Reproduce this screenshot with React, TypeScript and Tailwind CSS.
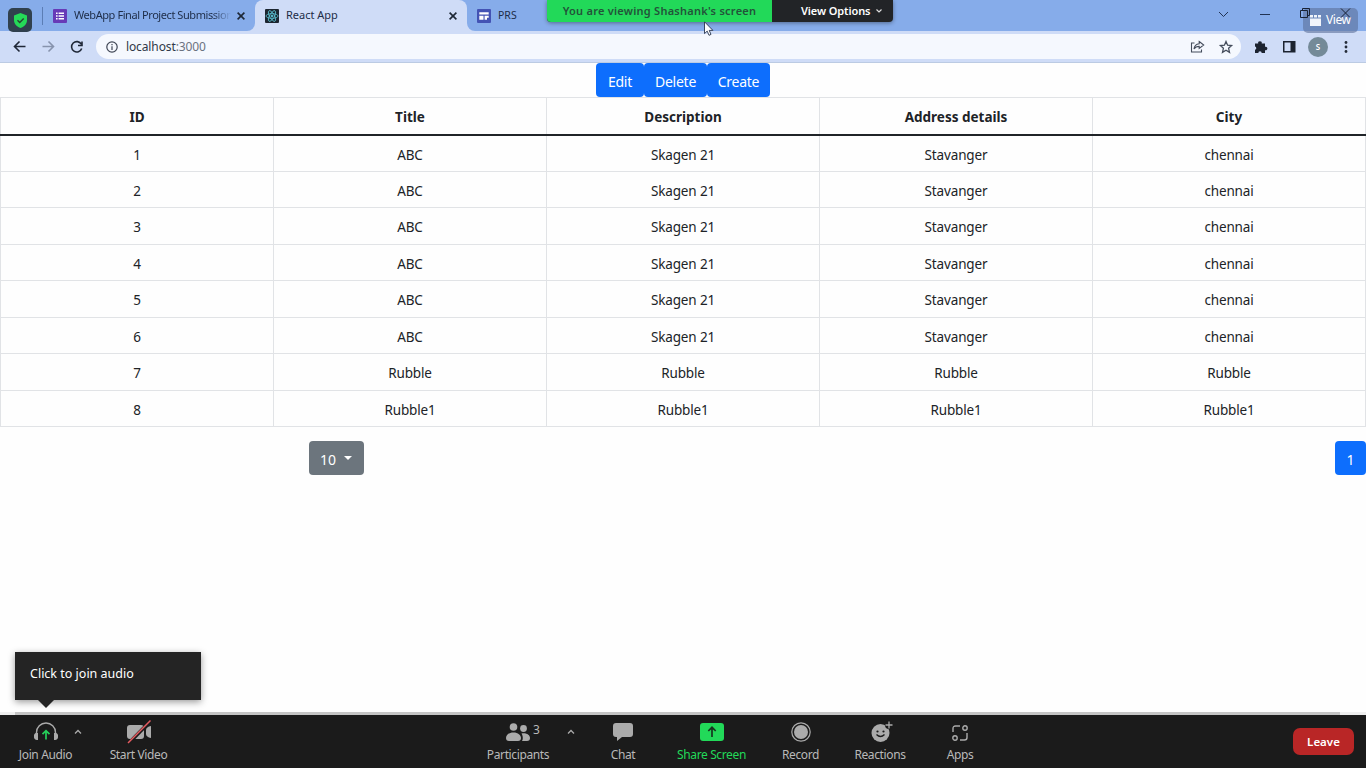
import React from "react";

const columns = ["ID", "Title", "Description", "Address details", "City"];
const rows: string[][] = [
  ...[1, 2, 3, 4, 5, 6].map((n) => [String(n), "ABC", "Skagen 21", "Stavanger", "chennai"]),
  ["7", "Rubble", "Rubble", "Rubble", "Rubble"],
  ["8", "Rubble1", "Rubble1", "Rubble1", "Rubble1"],
];

function Close() {
  return (
    <svg className="h-2 w-2 shrink-0" viewBox="0 0 8 8" stroke="#1d2736" strokeWidth="1.6">
      <path d="M.6.6 7.4 7.4M7.4.6.6 7.4" />
    </svg>
  );
}

function ReactLogo() {
  return (
    <svg className="h-3.5 w-3.5 shrink-0" viewBox="0 0 14 14" fill="none" stroke="#5cc3d3" strokeWidth=".8">
      <rect width="14" height="14" rx="1" fill="#1c2630" stroke="none" />
      <ellipse cx="7" cy="7" rx="6" ry="2.4" />
      <ellipse cx="7" cy="7" rx="6" ry="2.4" transform="rotate(60 7 7)" />
      <ellipse cx="7" cy="7" rx="6" ry="2.4" transform="rotate(120 7 7)" />
      <circle cx="7" cy="7" r="1" fill="#5cc3d3" />
    </svg>
  );
}

function TabStrip() {
  return (
    <div className="flex bg-[#cfdcf7] text-[11px] text-[#1d2c47]">
      <div className="flex h-[31px] w-[255px] shrink-0 items-center rounded-br-lg bg-[#86acea] pl-[42px]">
        <div className="h-[18px] w-px bg-[#5b7db5]" />
        <svg className="ml-2.5 h-3.5 w-3.5 shrink-0" viewBox="0 0 14 14">
          <rect width="14" height="14" rx="1" fill="#673ab7" />
          <path d="M3 3.5h1.6v1.6H3zM5.6 3.5H11v1.6H5.6zM3 6.2h1.6v1.6H3zM5.6 6.2H11v1.6H5.6zM3 8.9h1.6v1.6H3zM5.6 8.9H11v1.6H5.6z" fill="#fff" />
        </svg>
        <div className="ml-[7px] w-[157px] whitespace-nowrap bg-gradient-to-r from-[#1d2c47] from-88% to-[#86acea] bg-clip-text tracking-[-0.43px] text-transparent">
          WebApp Final Project Submission
        </div>
        <div className="ml-1.5"><Close /></div>
      </div>
      <div className="flex w-[212px] shrink-0 bg-[#86acea]">
        <div className="flex w-full items-center rounded-t-lg bg-[#cfdcf7] px-2.5">
          <ReactLogo />
          <span className="ml-[7px]">React App</span>
          <div className="ml-auto"><Close /></div>
        </div>
      </div>
      <div className="flex grow items-center rounded-bl-lg bg-[#86acea] pl-2.5">
        <svg className="h-3.5 w-3.5" viewBox="0 0 14 14">
          <rect width="14" height="14" rx="1" fill="#4353b4" />
          <path d="M2.3 3.2h9.4v2.3H2.3zM2.3 6.8h4.2v4H2.3zM7.6 6.8h4.1v2H10v2H7.6z" fill="#fff" />
        </svg>
        <span className="ml-[7px] text-[10.5px]">PRS</span>
        <svg className="mb-1 ml-auto mr-[68px] h-3 w-[82px]" viewBox="0 0 82 12" fill="none" stroke="#213353">
          <path d="m11 4 4.500 4.500L20 4M52 6.500h10" transform="translate(-8 0)" />
        </svg>
      </div>
    </div>
  );
}

function Toolbar() {
  return (
    <div className="flex h-8 items-center border-b border-[#bccbe3] bg-[#cfdcf7]">
      <svg className="ml-3 h-4 w-[74px] shrink-0" viewBox="0 0 74 16" fill="none" strokeWidth="1.6">
        <path d="M13.500 7.500H2.500M7.500 2.500l-5 5 5 5" stroke="#1f2737" />
        <path d="M30.500 7.500h11M36.500 2.500l5 5-5 5" stroke="#8793ad" />
        <path d="M69.300 5.200A5.200 5.200 0 1 0 69.700 9.500M70 2.500v4h-4" stroke="#1f2737" />
      </svg>
      <div className="ml-[10px] flex h-[25px] w-[1145px] shrink-0 items-center rounded-full bg-[#f5f8fe] pl-[10px] pr-[7px]">
        <svg className="h-3 w-3" viewBox="0 0 12 12" fill="none" stroke="#3e4554" strokeWidth="1.200">
          <circle cx="6" cy="6" r="5.200" />
          <path d="M6 5.300V9M6 3v1.300" />
        </svg>
        <span className="ml-2 text-[12px] tracking-[-0.12px] text-[#303848]">
          localhost<span className="text-[#6b7280]">:3000</span>
        </span>
        <svg className="ml-auto h-3.5 w-11" viewBox="0 0 44 14" fill="none" stroke="#454d5c" strokeWidth="1.100">
          <path d="M4.500 3H1.500v9h10V9.500" />
          <path d="M9.200 1.500 13.700 5 9.200 8.500V6.400C7 6.400 5.300 7 4 9c.3-3 2-5 5.200-5.300z" />
          <path d="m36 1.500 1.600 3.700 4 .4-3 2.700.9 4-3.500-2.100-3.500 2.100.9-4-3-2.700 4-.4z" strokeWidth="1.300" />
        </svg>
      </div>
      <svg className="ml-3 h-4 w-[44px] shrink-0" viewBox="0 0 44 16" fill="#1c2330">
        <path d="M2 4.500h3.200a1.800 1.800 0 1 1 3.500 0H12v3.300a1.800 1.800 0 1 1 0 3.400V14H8.700a1.700 1.700 0 0 0-3.400 0H2v-3.200a1.700 1.700 0 0 0 0-3.300z" />
        <path d="M30 2h12.500v11.500H30zM31.500 3.500V12h6V3.500z" fillRule="evenodd" />
      </svg>
      <div className="ml-[11px] flex h-5 w-5 shrink-0 items-center justify-center rounded-full bg-[#748a98] text-[8px] font-semibold text-white">S</div>
      <svg className="ml-4 h-3.5 w-1 shrink-0" viewBox="0 0 4 14" fill="#252c39">
        <circle cx="2" cy="2.500" r="1.400" /><circle cx="2" cy="7" r="1.400" /><circle cx="2" cy="11.500" r="1.400" />
      </svg>
    </div>
  );
}

function ShareOverlay() {
  return (
    <>
      <div className="absolute left-2 top-2 flex h-6 w-6 items-center justify-center rounded-[5px] bg-[#30404e]">
        <svg className="h-[15px] w-[13px]" viewBox="0 0 13 15">
          <path d="M6.500 0 13 2.600V7c0 4-2.800 6.700-6.500 8C2.800 13.700 0 11 0 7V2.600z" fill="#25d958" />
          <path d="m3.500 7.300 2.200 2.200L9.700 5.500" stroke="#284532" strokeWidth="1.400" fill="none" />
        </svg>
      </div>
      <div className="absolute left-[547px] top-0 flex h-[22px] w-[346px] overflow-hidden rounded-b bg-[#222427] text-[11px] font-semibold shadow-[0_1px_4px_#0006]">
        <div className="flex w-[225px] items-center justify-center whitespace-nowrap bg-[#22d959] text-[#23533a]">
          <span className="tracking-[0.25px]">You are viewing Shashank's screen</span>
        </div>
        <div className="flex grow items-center whitespace-nowrap pl-[29px] text-white">
          <span className="tracking-[-0.1px]">View Options</span>
          <svg className="ml-1.5 h-1.5 w-1.5" viewBox="0 0 6 6" fill="none" stroke="#ddd" strokeWidth="1.200"><path d="m.5 1.500 2.500 2.500 2.500-2.500" /></svg>
        </div>
      </div>
      <svg className="absolute left-[704px] top-[21px] h-[15px] w-2.5" viewBox="0 0 10 15">
        <path d="M.5.8v11.800l2.700-2.500 1.800 4.200 2-.9-1.800-4h3.700z" fill="#fff" stroke="#29364d" strokeWidth=".9" />
      </svg>
      <div className="absolute left-[1303px] top-2 flex h-[25px] w-[55px] items-center rounded-[5px] bg-[#5b7099]/60 pl-[7px] text-[12px] text-white">
        <svg className="h-[11px] w-[11px]" viewBox="0 0 11 11" fill="#f1f4fa"><path d="M0 0h3v2.500H0zM4 0h3v2.500H4zM8 0h3v2.500H8zM0 3.500h11V11H0z" /></svg>
        <span className="mb-0.5 ml-[5px] tracking-[-0.45px]">View</span>
      </div>
      <svg className="absolute left-[1298px] top-[7px] h-3 w-[54px]" viewBox="0 0 54 12" fill="none" stroke="#182235">
        <path d="M2.500 3.500h7v7h-7zM4.500 3.500v-2h7v7h-2M43 1.500l9 9m0-9-9 9" />
      </svg>
    </>
  );
}

function DataTable() {
  return (
    <table className="w-full table-fixed border-collapse text-center text-[13.5px] leading-5 text-[#202327]">
      <thead>
        <tr className="h-[37px]">
          {columns.map((c) => (
            <th key={c} className="border-x border-b-2 border-t border-b-[#202428] border-l-[#e1e3e6] border-r-[#e1e3e6] border-t-[#e1e3e6] p-0 pt-[3px] font-bold">{c}</th>
          ))}
        </tr>
      </thead>
      <tbody>
        {rows.map((r) => (
          <tr key={r[0]} className="h-[36.5px]">
            {r.map((v, i) => (
              <td key={i} className="border border-[#e1e3e6] p-0 pt-[3px] tracking-[-0.15px]">{v}</td>
            ))}
          </tr>
        ))}
      </tbody>
    </table>
  );
}

function Page() {
  return (
    <main className="flex h-[652px] flex-col bg-[#fefefe]">
      <div className="flex h-[34px] shrink-0 justify-center text-[14px] text-white">
        {[["Edit", "w-12"], ["Delete", "w-[63px]"], ["Create", "w-[63px]"]].map(([t, w]) => (
          <button key={t} className={w + " rounded bg-[#0d6efd] pt-0.5 tracking-[-0.25px]"}>{t}</button>
        ))}
      </div>
      <DataTable />
      <div className="mt-3.5 flex justify-between pl-[309px] text-[14px] text-white">
        <button className="flex h-[34px] w-[55px] items-center rounded bg-[#6c757d] pl-[11px] pt-0.5">
          10
          <svg className="mb-0.5 ml-2 h-1 w-2" viewBox="0 0 8 4" fill="#fff"><path d="M0 0h8L4 4z" /></svg>
        </button>
        <button className="h-[34px] w-[31px] rounded bg-[#0d6efd] pt-0.5">1</button>
      </div>
      <div className="mt-auto h-[3px] bg-[#eeeeee] pl-[15px] pr-[26px]"><div className="h-full bg-[#c4c4c4]" /></div>
    </main>
  );
}

function Item({ label, width, children, green }: { label: string; width: string; children: React.ReactNode; green?: boolean }) {
  return (
    <div className={width + " flex shrink-0 flex-col items-center pt-[5px] " + (green ? "text-[#22d959]" : "text-[#b9b9b9]")}>
      <div className="flex h-6 items-center justify-center">{children}</div>
      <span className="mt-[3px] whitespace-nowrap text-[12px] leading-4 tracking-[-0.37px]">{label}</span>
    </div>
  );
}

function Caret({ margin }: { margin: string }) {
  return (
    <svg className={margin + " h-1.5 w-2 shrink-0"} viewBox="0 0 8 6" fill="none" stroke="#aaa" strokeWidth="1.300"><path d="m1 4.500 3-3 3 3" /></svg>
  );
}

function MeetingBar() {
  return (
    <footer className="relative flex h-[53px] bg-[#1b1b1b]">
      <Item label="Join Audio" width="w-[91px]">
        <svg className="h-5 w-6" viewBox="0 0 24 20" fill="none">
          <path d="M2.500 12.500v-2a9.500 9.500 0 0 1 19 0v2" stroke="#ababab" strokeWidth="1.400" />
          <path d="M4 11v7H3a3 3 0 0 1-3-3.500A3 3 0 0 1 4 11M20 11v7h1a3 3 0 0 0 3-3.500 3 3 0 0 0-4-3.500" fill="#ababab" />
          <path d="M12 17.500V9M8.500 12.200 12 8.700l3.500 3.500" stroke="#25d15a" strokeWidth="1.700" />
        </svg>
      </Item>
      <div className="-ml-[17px] w-[17px]"><Caret margin="mt-[14px]" /></div>
      <Item label="Start Video" width="w-[95px]">
        <svg className="h-6 w-6" viewBox="0 0 24 24">
          <rect y="5" width="17" height="14" rx="3" fill="#ababab" />
          <path d="M24 6v12c-3-.5-5-2-5-4v-4c0-2 2-3.500 5-4" fill="#ababab" />
          <path d="M1.500 23.500 23.500 1" stroke="#1b1b1b" strokeWidth="3.500" /><path d="M1 23 23.500.500" stroke="#e65b60" strokeWidth="1.500" />
        </svg>
      </Item>
      <div className="ml-[282px] flex">
        <Item label="Participants" width="w-[100px]">
          <svg className="ml-[10px] h-[18px] w-6" viewBox="0 0 24 18" fill="#ababab">
            <circle cx="7.500" cy="4" r="3.800" /><circle cx="17.500" cy="5.500" r="3.400" />
            <path d="M0 15c0-3 3-5.500 7.500-5.500S15 12 15 15c0 2-1 3-3 3H3c-2 0-3-1-3-3M15.500 10.500c5-1 8.500 1.500 8.500 4.500 0 2-1 3-3 3h-5c.7-1 .8-2 .8-3 0-1.700-.4-3-1.300-4.500" />
          </svg>
          <span className="mb-1 ml-[3px] text-[12px] leading-4">3</span>
        </Item>
        <Caret margin="mt-[14px] -ml-[1px]" />
        <Item label="Chat" width="w-24">
          <svg className="h-[18px] w-5" viewBox="0 0 20 18" fill="#ababab"><path d="M3 0h14a3 3 0 0 1 3 3v8a3 3 0 0 1-3 3H9l-5 4v-4H3a3 3 0 0 1-3-3V3a3 3 0 0 1 3-3" /></svg>
        </Item>
        <Item label="Share Screen" width="w-[81px]" green>
          <svg className="h-[18px] w-6" viewBox="0 0 24 18" fill="none"><rect width="24" height="18" rx="3" fill="#22d959" /><path d="M12 14V4.500M8.300 8 12 4.300 15.700 8" stroke="#17351f" strokeWidth="1.700" /></svg>
        </Item>
        <Item label="Record" width="w-[97px]">
          <svg className="h-5 w-5" viewBox="0 0 20 20"><circle cx="10" cy="10" r="9.200" fill="none" stroke="#ababab" strokeWidth="1.200" /><circle cx="10" cy="10" r="7" fill="#ababab" /></svg>
        </Item>
        <Item label="Reactions" width="w-[62px]">
          <svg className="ml-1 h-[22px] w-[22px]" viewBox="0 0 22 22">
            <circle cx="9.500" cy="12" r="9" fill="#ababab" />
            <circle cx="18" cy="4" r="4" fill="#1b1b1b" />
            <path d="M18 .5v7M14.500 4h7" stroke="#ababab" strokeWidth="1.300" />
            <circle cx="6.500" cy="10.500" r="1.100" fill="#1b1b1b" /><circle cx="12.500" cy="10.500" r="1.100" fill="#1b1b1b" />
            <path d="M5.500 13.500q4 4 8 0" fill="none" stroke="#1b1b1b" strokeWidth="1.300" />
          </svg>
        </Item>
        <Item label="Apps" width="w-[98px]">
          <svg className="mt-0.5 h-4 w-4" viewBox="0 0 16 16" fill="none" stroke="#ababab" strokeWidth="1.400">
            <path d="M1 7V3.500Q1 1 3.500 1H8M15 8v4.500q0 2.500-2.500 2.500H8" /><circle cx="13" cy="3" r="2.200" /><circle cx="3" cy="13" r="2.200" />
          </svg>
        </Item>
      </div>
      <button className="ml-auto mr-3 mt-[13px] h-[27px] w-[61px] rounded-[7px] bg-[#b92626] text-[11.5px] font-semibold text-white">Leave</button>
      <div className="absolute -top-[63px] left-[15px] h-12 w-[186px] bg-[#242424] pl-[15px] pt-[13px] text-[12.5px] leading-[18px] tracking-[0px] text-white shadow-[0_2px_7px_#0006]">
        Click to join audio
        <svg className="absolute left-[23px] top-12 h-2 w-4" viewBox="0 0 16 8" fill="#242424"><path d="M0 0h16L8 8z" /></svg>
      </div>
    </footer>
  );
}

export default function App() {
  return (
    <div className="relative h-[768px] w-[1366px] overflow-hidden font-['Noto_Sans',sans-serif]">
      <TabStrip />
      <Toolbar />
      <ShareOverlay />
      <Page />
      <MeetingBar />
    </div>
  );
}
